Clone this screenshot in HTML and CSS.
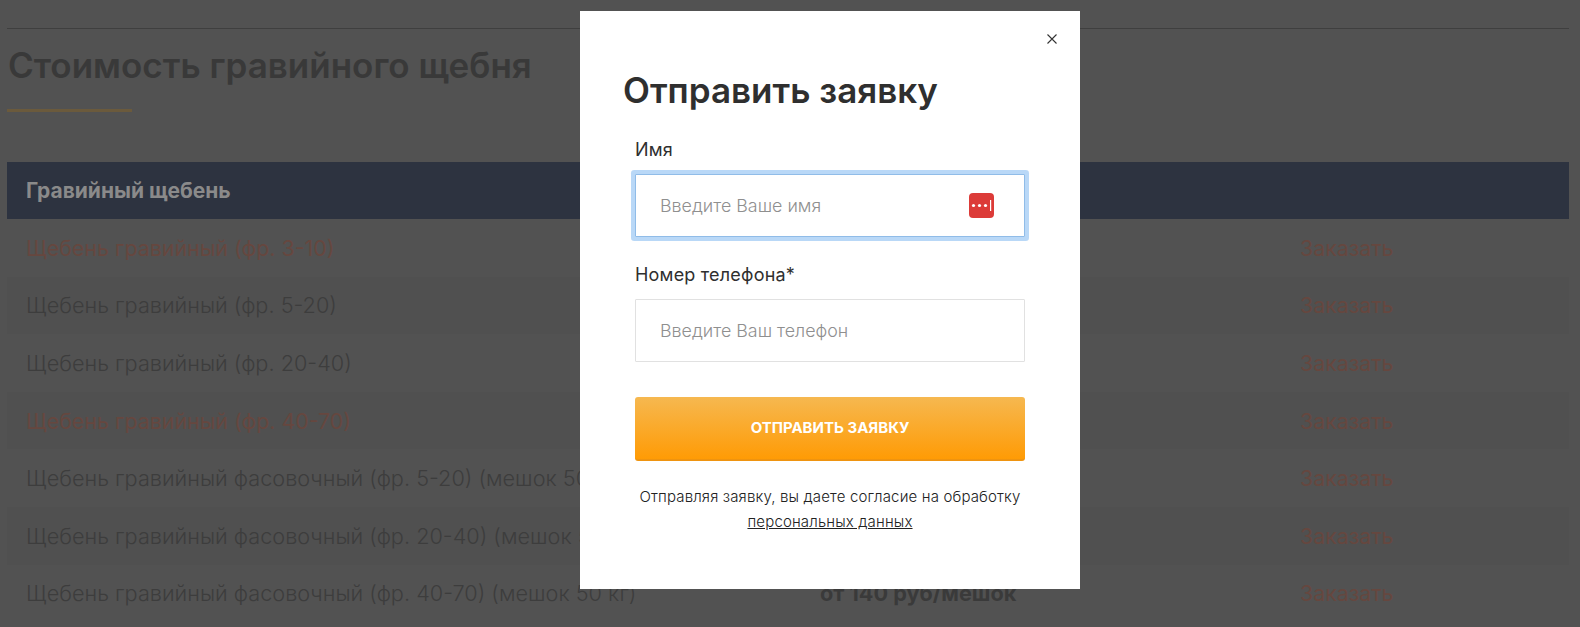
FILE: index.html
```html
<!DOCTYPE html>
<html lang="ru">
<head>
<meta charset="UTF-8">
<title>Стоимость гравийного щебня</title>
<link rel="stylesheet" href="styles.css">
</head>
<body>
<div class="page">
  <h2 class="page-title">Стоимость гравийного щебня</h2>
  <div class="price-table">
    <div class="price-head">Гравийный щебень</div>
    <div class="price-row">
      <span class="price-name is-link">Щебень гравийный (фр. 3-10)</span>
      <span class="price-value"></span>
      <span class="price-order">Заказать</span>
    </div>
    <div class="price-row">
      <span class="price-name">Щебень гравийный (фр. 5-20)</span>
      <span class="price-value"></span>
      <span class="price-order">Заказать</span>
    </div>
    <div class="price-row">
      <span class="price-name">Щебень гравийный (фр. 20-40)</span>
      <span class="price-value"></span>
      <span class="price-order">Заказать</span>
    </div>
    <div class="price-row">
      <span class="price-name is-link">Щебень гравийный (фр. 40-70)</span>
      <span class="price-value"></span>
      <span class="price-order">Заказать</span>
    </div>
    <div class="price-row">
      <span class="price-name">Щебень гравийный фасовочный (фр. 5-20) (мешок 50 кг)</span>
      <span class="price-value"></span>
      <span class="price-order">Заказать</span>
    </div>
    <div class="price-row">
      <span class="price-name">Щебень гравийный фасовочный (фр. 20-40) (мешок 50 кг)</span>
      <span class="price-value"></span>
      <span class="price-order">Заказать</span>
    </div>
    <div class="price-row">
      <span class="price-name">Щебень гравийный фасовочный (фр. 40-70) (мешок 50 кг)</span>
      <span class="price-value">от 140 руб/мешок</span>
      <span class="price-order">Заказать</span>
    </div>
  </div>
</div>

<!-- модальное окно -->
<div class="modal">
  <svg class="modal-close" width="10" height="10" viewBox="0 0 10 10">
    <path d="M0.5 0.5L9.5 9.5M9.5 0.5L0.5 9.5" stroke="#333" stroke-width="1.1" fill="none"/>
  </svg>
  <h3 class="modal-title">Отправить заявку</h3>
  <form class="modal-form">
    <label class="field-label">Имя</label>
    <div class="field">
      <input class="field-input is-focus" type="text" placeholder="Введите Ваше имя">
      <svg class="field-key" width="25" height="25" viewBox="0 0 25 25">
        <rect width="25" height="25" rx="4" fill="#dc3b38"/>
        <circle cx="4.5" cy="12.5" r="1.6" fill="#fff"/>
        <circle cx="10.5" cy="12.5" r="1.6" fill="#fff"/>
        <circle cx="16.5" cy="12.5" r="1.6" fill="#fff"/>
        <rect x="21" y="7" width="1.2" height="11" fill="#fff"/>
      </svg>
    </div>
    <label class="field-label">Номер телефона*</label>
    <div class="field">
      <input class="field-input" type="text" placeholder="Введите Ваш телефон">
    </div>
    <button class="submit-btn" type="button">Отправить заявку</button>
    <p class="form-note">Отправляя заявку, вы даете согласие на обработку <a class="form-note-link">персональных данных</a></p>
  </form>
</div>
</body>
</html>
```

FILE: styles.css
```css
html, body {
  height: 100%;
}

body {
  margin: 0;
  overflow: hidden;
  background-color: #525252;
  font-family: 'Inter', 'Liberation Sans', sans-serif;
}

.page {
  margin: 28px 11px 0 7px;
  border-top: 1px solid #3f3f3f;
}

.page-title {
  margin: 0;
  padding: 14px 0 0 1px;
  font-size: 35px;
  line-height: 44px;
  font-weight: 600;
  color: #393939;
}

.page-title::after {
  content: "";
  display: block;
  width: 125px;
  height: 3px;
  margin: 22px 0 0 -1px;
  background-color: #6b5a3c;
}

.price-table {
  margin-top: 50px;
}

.price-head {
  height: 57px;
  padding-left: 19px;
  background-color: #2d3340;
  font-size: 21px;
  line-height: 57px;
  font-weight: 700;
  color: #8a8a8a;
}

.price-row {
  display: grid;
  grid-template-columns: 813px 480px 1fr;
  align-items: center;
  height: 57.6px;
  font-size: 21.7px;
  font-weight: 300;
  color: #3d3d3d;
}

.price-row:nth-child(odd) {
  background-color: #505050;
}

.price-name {
  padding-left: 19px;
  white-space: nowrap;
}

.price-name.is-link {
  font-weight: 400;
  font-size: 21.35px;
  color: #66473f;
}

.price-value {
  font-weight: 700;
  color: #3a3a3a;
}

.price-order {
  font-weight: 400;
  font-size: 21.35px;
  color: #66473f;
}

/* модальное окно */
.modal {
  position: absolute;
  left: 580px;
  top: 11px;
  width: 500px;
  height: 578px;
  box-sizing: border-box;
  padding: 56px 55px 0 43px;
  background-color: #fff;
  color: #2f2f2f;
}

.modal-close {
  position: absolute;
  right: 23px;
  top: 23px;
}

.modal-title {
  margin: 0 0 25px;
  font-size: 35px;
  line-height: 46px;
  font-weight: 600;
}

.modal-form {
  padding-left: 12px;
}

.field-label {
  display: block;
  font-size: 18px;
  letter-spacing: 0.2px;
  line-height: 24px;
  margin-bottom: 12px;
}

.field {
  position: relative;
  margin-bottom: 26px;
}

.field-input {
  display: block;
  width: 100%;
  height: 63px;
  box-sizing: border-box;
  padding: 0 24px;
  border: 1px solid #e1e1e1;
  border-radius: 1px;
  outline: none;
  font-family: inherit;
  font-size: 17.85px;
  font-weight: 300;
  color: #333;
}

.field-input::placeholder {
  color: #8f8f8f;
}

.field-input.is-focus {
  border-color: #90bce8;
  box-shadow: 0 0 0 4px #b9d8f7;
}

.field-key {
  position: absolute;
  right: 31px;
  top: 19px;
}

.submit-btn {
  display: block;
  width: 100%;
  height: 64px;
  margin-top: 35px;
  padding: 0 0 2px;
  border: none;
  border-radius: 3px;
  border-bottom: 2px solid #ef9410;
  background: linear-gradient(#f6b850, #ff9b05);
  font-family: inherit;
  font-size: 15px;
  font-weight: 700;
  text-transform: uppercase;
  color: #fff;
}

.form-note {
  margin: 23px 0 0;
  font-size: 15px;
  font-weight: 300;
  letter-spacing: 0.15px;
  line-height: 25px;
  text-align: center;
  color: #222;
}

.form-note-link {
  color: #222;
  text-decoration: underline;
}
```
